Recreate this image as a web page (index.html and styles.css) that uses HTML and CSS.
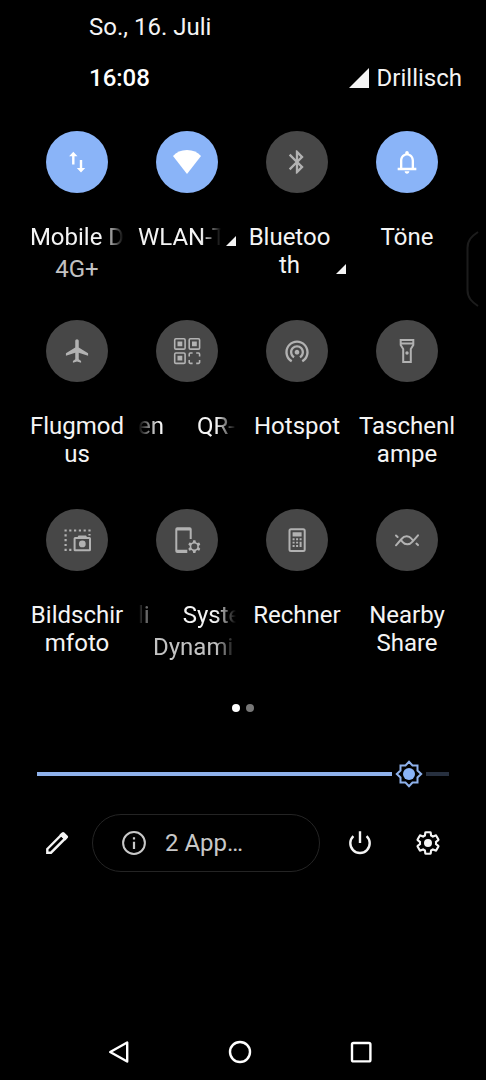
FILE: index.html
```html
<!DOCTYPE html>
<html lang="de">
<head>
<meta charset="utf-8">
<meta name="viewport" content="width=device-width, initial-scale=1">
<title>Schnelleinstellungen</title>
<link rel="stylesheet" href="styles.css">
</head>
<body>
<div class="shade">
  <header class="status">
    <p class="date">So., 16. Juli</p>
    <div class="status-row">
      <time class="clock">16:08</time>
      <div class="carrier">
        <svg class="signal" viewBox="0 0 20 20" aria-hidden="true"><path d="M20 0v20H0z"/></svg>
        <span>Drillisch</span>
      </div>
    </div>
  </header>

  <main>
    <div class="tiles">
      <button class="tile active" type="button">
        <span class="disc"><svg class="icon" viewBox="0 0 28 28"><path d="M10.300 3.800L14.500 8.300H11.500V16.500H9.100V8.300H6.100zM18 24.500L13.800 20H16.800V12H19.200V20H22.200z"/></svg></span>
        <span class="label clip fade-end">Mobile D</span>
        <span class="sub">4G+</span>
      </button>
      <button class="tile active" type="button">
        <span class="disc"><svg class="icon" viewBox="0 0 28 28"><path d="M14 26L0 8Q5 2 14 2T28 8z"/></svg></span>
        <span class="label-row">
          <span class="label clip fade-end">WLAN-T</span>
          <svg class="more" viewBox="0 0 10 10" aria-hidden="true"><path d="M10 0v10H0z"/></svg>
        </span>
      </button>
      <button class="tile" type="button">
        <span class="disc"><svg class="icon" viewBox="0 0 24 24"><path d="M17.710 7.710L12 2h-1v7.590L6.410 5 5 6.410 10.590 12 5 17.590 6.410 19 11 14.410V22h1l5.710-5.710-4.300-4.290 4.300-4.290zM13 5.830l1.880 1.880L13 9.590V5.830zm1.880 10.460L13 18.170v-3.760l1.880 1.880z"/></svg></span>
        <span class="label-row">
          <span class="label">Bluetooth</span>
          <svg class="more" viewBox="0 0 10 10" aria-hidden="true"><path d="M10 0v10H0z"/></svg>
        </span>
      </button>
      <button class="tile active" type="button">
        <span class="disc"><svg class="icon" viewBox="0 0 24 24"><path d="M12 22c1.100 0 2-.9 2-2h-4c0 1.100.9 2 2 2zM18 17v-6c0-3.070-1.630-5.640-4.500-6.320V4c0-.83-.67-1.500-1.500-1.500s-1.500.67-1.500 1.500v.68C7.640 5.360 6 7.920 6 11v6H4v2h16v-2zM16 17H8v-6c0-2.480 1.510-4.500 4-4.500s4 2.020 4 4.500z" fill-rule="evenodd"/></svg></span>
        <span class="label">Töne</span>
      </button>

      <button class="tile" type="button">
        <span class="disc"><svg class="icon" viewBox="0 0 24 24"><path d="M21.500 16v-2l-8-5V3.500c0-.83-.67-1.500-1.500-1.500s-1.500.67-1.500 1.500V9l-8 5v2l8-2.500V19l-2 1.500V22l3.500-1 3.500 1v-1.500L13.500 19v-5.500z"/></svg></span>
        <span class="label">Flugmodus</span>
      </button>
      <button class="tile" type="button">
        <span class="disc"><svg class="icon" viewBox="0 0 28 28">
          <g class="line thin"><rect x="1.700" y="1.700" width="10.400" height="10.400" rx="1.200"/><rect x="16.200" y="1.700" width="10.400" height="10.400" rx="1.200"/><rect x="1.700" y="16" width="10.400" height="10.400" rx="1.200"/><path d="M19.600 16h-2.200a1.200 1.200 0 0 0-1.200 1.200v2.200M23.200 16h2.200a1.200 1.200 0 0 1 1.200 1.200v2.200M19.600 26.400h-2.200a1.200 1.200 0 0 1-1.200-1.200V23M23.200 26.400h2.200a1.200 1.200 0 0 0 1.200-1.200V23"/></g>
          <path d="M4.500 4.500h4.800v4.800H4.500zM19 4.500h4.800v4.800H19zM4.500 18.800h4.800v4.800H4.500z"/>
        </svg></span>
        <span class="label clip fade-both marquee"><span>en</span><span>QR-</span></span>
      </button>
      <button class="tile" type="button">
        <span class="disc"><svg class="icon" viewBox="0 0 24 24"><path d="M12 11c-1.100 0-2 .9-2 2s.9 2 2 2 2-.9 2-2-.9-2-2-2zm6 2c0-3.310-2.690-6-6-6s-6 2.690-6 6c0 2.220 1.210 4.150 3 5.190l1-1.740c-1.190-.7-2-1.970-2-3.450 0-2.210 1.790-4 4-4s4 1.790 4 4c0 1.480-.81 2.750-2 3.450l1 1.740c1.790-1.040 3-2.970 3-5.190zM12 3C6.480 3 2 7.480 2 13c0 3.700 2.010 6.920 4.990 8.650l1-1.730C5.610 18.530 4 15.960 4 13c0-4.420 3.580-8 8-8s8 3.580 8 8c0 2.960-1.610 5.530-4 6.920l1 1.730c2.990-1.730 5-4.950 5-8.650 0-5.520-4.480-10-10-10z"/></svg></span>
        <span class="label">Hotspot</span>
      </button>
      <button class="tile" type="button">
        <span class="disc"><svg class="icon" viewBox="0 0 28 28"><path class="line" d="M7.700 3h12.600v5l-2.500 4v13h-7.600V12L7.700 8zM7.700 6.600h12.600"/><circle cx="14" cy="16" r="1.700"/></svg></span>
        <span class="label">Taschenlampe</span>
      </button>

      <button class="tile" type="button">
        <span class="disc"><svg class="icon" viewBox="0 0 28 28">
          <path d="M1.500 3.400h2.200v2.200H1.500zM6.200 3.400h2.200v2.200H6.200zM11 3.400h2.200v2.200H11zM15.800 3.400H18v2.200h-2.200zM20.600 3.400h2.200v2.200h-2.200zM25.400 3.400h2.200v2.200h-2.200zM25.400 8h2.200v1.600h-2.200zM1.500 8.200h2.200v2.200H1.500zM1.500 13h2.200v2.200H1.500zM1.500 17.900h2.200v2.200H1.500zM1.500 22.700h2.200v2.200H1.500zM6.200 22.700h2.200v2.200H6.200zM15.500 9.500h7.500l1.300 2h-10z"/>
          <rect class="line" x="11.600" y="11.900" width="15.400" height="12.400" rx=".6"/><circle cx="19.300" cy="17.900" r="3.400"/>
        </svg></span>
        <span class="label">Bildschirmfoto</span>
      </button>
      <button class="tile" type="button">
        <span class="disc"><svg class="icon" viewBox="0 0 28 28">
          <path d="M4.300 1.300h12.400a2 2 0 0 1 2 2V13h-2V4.600H4.300v19.200h10v3.300h-10a2 2 0 0 1-2-2V3.300a2 2 0 0 1 2-2z"/>
          <path d="M20.200 14.300h2.200l.5 2 1.300.8 2-.6 1.100 1.900-1.500 1.500v1.400l1.500 1.500-1.100 1.900-2-.6-1.300.8-.5 2h-2.200l-.5-2-1.300-.8-2 .6-1.100-1.900 1.500-1.500v-1.400l-1.500-1.500 1.100-1.900 2 .6 1.300-.8zM21.300 17.600a3 3 0 1 0 0 6 3 3 0 0 0 0-6z" fill-rule="evenodd"/>
        </svg></span>
        <span class="label clip fade-both marquee"><span>li</span><span>Syste</span></span>
        <span class="sub clip fade-end sub-inset">Dynami</span>
      </button>
      <button class="tile" type="button">
        <span class="disc"><svg class="icon" viewBox="0 0 28 28">
          <rect class="line" x="6.500" y="3.300" width="15.200" height="21.600" rx="1.500"/>
          <path d="M9.600 6.300h9v4.200h-9zM9.600 12.300h2v1.900h-2zM13.100 12.300h2v1.900h-2zM16.600 12.300h2v1.900h-2zM9.600 15.700h2v1.900h-2zM13.100 15.700h2v1.900h-2zM16.600 15.700h2V21h-2zM9.600 19.100h2V21h-2zM13.100 19.100h2V21h-2z"/>
        </svg></span>
        <span class="label">Rechner</span>
      </button>
      <button class="tile" type="button">
        <span class="disc"><svg class="icon" viewBox="0 0 28 28"><path class="line round" d="M3 19.300L8.500 13C11.500 9.400 16 9.600 18.300 12.500L20.200 14.800M25 9.300L19.500 15.600C16.500 19.200 12 19 9.700 16.100L7.800 13.800M3 9.500l1.600 1.500M25 19.100l-1.600-1.500"/></svg></span>
        <span class="label">Nearby Share</span>
      </button>
    </div>

    <div class="pages" aria-hidden="true"><span class="dot current"></span><span class="dot"></span></div>

    <input class="brightness" type="range" min="0" max="1000" value="939" aria-label="Displayhelligkeit">

    <div class="actions">
      <button class="action edit" type="button" aria-label="Bearbeiten">
        <svg class="icon" viewBox="0 0 28 28"><path class="line thick" d="M4.300 20L18.300 6l3.700 3.700-14 14H4.300z"/><path d="M16.500 5.800l2.400-2.400c.7-.7 1.700-.7 2.400 0l3.300 3.300c.7.7.7 1.700 0 2.400l-2.400 2.400z"/></svg>
      </button>
      <button class="apps" type="button">
        <svg class="info" viewBox="0 0 24 24" aria-hidden="true"><circle class="line" cx="12" cy="12" r="10.900"/><path d="M10.900 10.700h2.200V18h-2.200zM10.900 6.200h2.200v2.300h-2.200z"/></svg>
        <span>2 App…</span>
      </button>
      <button class="action" type="button" aria-label="Ein/Aus">
        <svg class="icon" viewBox="0 0 28 28"><path class="line thick" d="M14 2.200V14M7.400 7.200a9.700 9.700 0 1 0 13.200 0"/></svg>
      </button>
      <button class="action" type="button" aria-label="Einstellungen">
        <svg class="icon" viewBox="0 0 26 26"><path class="line" transform="translate(1 1)" d="M19.430 12.980c.04-.32.07-.64.07-.98s-.03-.66-.07-.98l2.110-1.650c.19-.15.24-.42.12-.64l-2-3.460c-.12-.22-.39-.3-.61-.22l-2.490 1c-.52-.4-1.080-.73-1.690-.98l-.38-2.650C14.460 2.180 14.250 2 14 2h-4c-.25 0-.46.180-.49.420l-.38 2.650c-.61.25-1.170.59-1.690.98l-2.490-1c-.23-.09-.49 0-.61.220l-2 3.460c-.13.22-.07.49.12.640l2.110 1.650c-.04.32-.07.65-.07.98s.03.66.07.98l-2.110 1.650c-.19.150-.24.420-.12.640l2 3.460c.12.220.39.300.61.220l2.490-1c.52.4 1.080.73 1.690.98l.38 2.650c.03.240.24.420.49.420h4c.25 0 .46-.18.49-.42l.38-2.650c.61-.25 1.170-.59 1.690-.98l2.490 1c.23.09.49 0 .61-.22l2-3.460c.12-.22.07-.49-.12-.64z"/><circle cx="13" cy="13" r="3.700"/></svg>
      </button>
    </div>
  </main>

  <nav class="navbar">
    <button type="button" aria-label="Zurück"><svg class="nav-icon" viewBox="0 0 24 24"><path d="M20.200 2.500v19L3.200 12z"/></svg></button>
    <button type="button" aria-label="Startseite"><svg class="nav-icon" viewBox="0 0 24 24"><circle cx="12" cy="12" r="10"/></svg></button>
    <button type="button" aria-label="Übersicht"><svg class="nav-icon" viewBox="0 0 24 24"><rect x="3" y="3" width="18.400" height="18.400" rx="1.500"/></svg></button>
  </nav>

  <svg class="edge-handle" viewBox="0 0 20 76" aria-hidden="true"><path d="M12 1C6 5 1.500 9 1.500 17v42C1.500 67 6 71 12 75"/></svg>
</div>
</body>
</html>
```

FILE: styles.css
```css
* {
  box-sizing: border-box;
}

body {
  margin: 0;
  background: #000;
  color: #f4f4f4;
  font: 400 24px/28px Roboto, "Noto Sans", sans-serif;
}

button {
  margin: 0;
  padding: 0;
  border: 0;
  background: none;
  color: inherit;
  font: inherit;
  cursor: pointer;
}

svg {
  display: block;
  flex: none;
  fill: currentColor;
}

.shade {
  position: relative;
  display: flex;
  flex-direction: column;
  min-height: 100vh;
}

/* Status area */
.status {
  display: flex;
  flex-direction: column;
  gap: 23px;
  padding: 13px 24px 0 89px;
}

.date {
  margin: 0;
}

.status-row,
.carrier {
  display: flex;
  align-items: center;
}

.status-row {
  justify-content: space-between;
}

.clock {
  color: #fff;
  font-weight: 500;
}

.carrier {
  gap: 8px;
}

.signal {
  width: 20px;
  height: 20px;
}

/* Tiles */
.tiles {
  display: grid;
  grid-template-columns: repeat(4, 1fr);
  grid-auto-rows: minmax(152px, auto);
  row-gap: 37px;
  padding: 39px 24px 0 22px;
}

.tile {
  display: flex;
  flex-direction: column;
  align-items: center;
  min-width: 0;
  padding: 0 6px;
}

.disc {
  display: grid;
  place-items: center;
  width: 62px;
  height: 62px;
  margin-bottom: 30px;
  border-radius: 50%;
  background: #474747;
  color: #b2b2b2;
}

.active .disc {
  background: #8ab4f8;
  color: #fff;
}

.icon {
  width: 28px;
  height: 28px;
}

.line {
  fill: none;
  stroke: currentColor;
  stroke-width: 2;
}

.thin {
  stroke-width: 1.6;
}

.thick {
  stroke-width: 2.4;
}

.round {
  stroke-linecap: round;
}

.label {
  max-width: 100%;
  overflow-wrap: anywhere;
}

.label-row {
  display: flex;
  align-items: flex-end;
  gap: 5px;
  width: 100%;
}

.label-row .label {
  flex: 1;
  min-width: 0;
}

.more {
  width: 10px;
  height: 10px;
  margin-bottom: 5px;
}

.clip {
  overflow: hidden;
  white-space: nowrap;
  text-align: left;
}

.fade-end {
  mask-image: linear-gradient(to left, transparent, #000 20px);
}

.fade-both {
  mask-image: linear-gradient(to right, transparent, #000 20px calc(100% - 20px), transparent);
}

.marquee {
  display: flex;
  gap: 33px;
  width: 100%;
}

.sub {
  margin-top: 4px;
  color: #c2c2c2;
}

.sub-inset {
  width: 100%;
  padding-left: 15px;
}

/* Page indicator */
.pages {
  display: flex;
  justify-content: center;
  gap: 6px;
  padding: 43px 0 0;
}

.dot {
  width: 8px;
  height: 8px;
  border-radius: 50%;
  background: #777;
}

.dot.current {
  background: #fff;
}

/* Brightness */
.brightness {
  display: block;
  appearance: none;
  width: calc(100% - 74px);
  height: 34px;
  margin: 45px 37px 0;
  border-radius: 3px;
  background: linear-gradient(to right, #8fb2ec 90%, #27303f 90%) center / 100% 4px no-repeat;
  cursor: pointer;
}

.brightness::-webkit-slider-thumb {
  appearance: none;
  width: 34px;
  height: 34px;
  background: #000 url("data:image/svg+xml,%3Csvg xmlns='http://www.w3.org/2000/svg' viewBox='0 0 28 28'%3E%3Cpath d='M14 1.800l3.500 3.700h5v5L26.200 14l-3.700 3.500v5h-5L14 26.200l-3.500-3.700h-5v-5L1.800 14l3.700-3.500v-5h5z' fill='none' stroke='%238fb2ec' stroke-width='2'/%3E%3Ccircle cx='14' cy='14' r='6' fill='%238ab4f8'/%3E%3C/svg%3E") center / 28px 28px no-repeat;
}

/* Footer actions */
.actions {
  display: flex;
  align-items: center;
  padding: 23px 24px 0 22px;
}

.action {
  display: grid;
  place-items: center;
  width: 68px;
  height: 56px;
}

.edit {
  width: 70px;
}

.apps {
  display: flex;
  flex: 1;
  align-items: center;
  gap: 19px;
  height: 58px;
  margin-right: 6px;
  padding: 0 29px;
  border: 1px solid #242424;
  border-radius: 29px;
  color: #c8c8c8;
}

.info {
  width: 24px;
  height: 24px;
}

/* System navigation */
.navbar {
  display: flex;
  justify-content: center;
  margin-top: auto;
  padding: 0 6px 4px 0;
}

.navbar button {
  display: grid;
  place-items: center;
  width: 121px;
  height: 48px;
}

.nav-icon {
  width: 24px;
  height: 24px;
  fill: none;
  stroke: #fff;
  stroke-width: 2.4;
  stroke-linejoin: round;
}

/* Side panel grip lying over the right screen edge */
.edge-handle {
  position: absolute;
  top: 231px;
  right: 0;
  width: 20px;
  height: 76px;
  fill: none;
  stroke: #1c1c1c;
  stroke-width: 2;
}
```
